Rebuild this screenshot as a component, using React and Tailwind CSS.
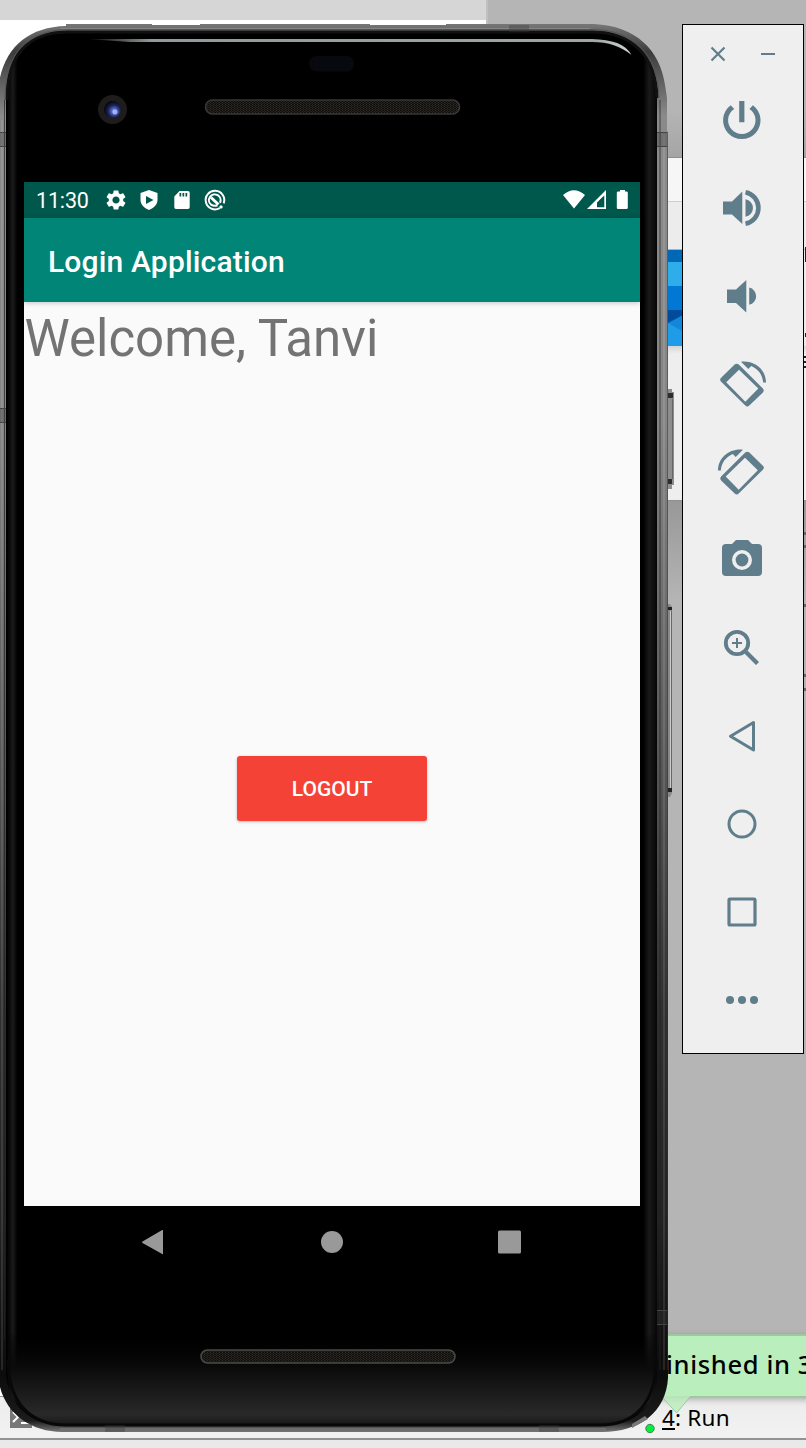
import React from "react";
import { MdSettings } from "react-icons/md";

const C = "#607d8b";

function Tool({ children }) {
  return (
    <div className="flex h-[88px] w-full items-center justify-center pr-[2px]">
      <svg className="overflow-visible" width="48" height="48" viewBox="0 0 48 48" fill={C}>{children}</svg>
    </div>
  );
}

function RotateIcon({ flip }) {
  return (
    <g transform={flip ? "translate(48 0) scale(-1 1)" : undefined}>
      <path fillRule="evenodd" d="M16.600 4.600Q18.700 2.700 20.800 4.600L44.900 28.600Q46.500 30.500 44.900 32.400L31.300 45.600Q29.300 47.400 27.300 45.600L2.900 21.400Q1.400 19.700 2.900 18zM21 9.800 8.200 22.300 27.300 41.700 40.300 28.500z" />
      <path d="M23 1.700C36.500 .2 48 9.500 48 22.600H45.200C44.500 14.500 40 8.700 33.200 5.900L30.300 9z" />
    </g>
  );
}

function StatusBar() {
  return (
    <div className="flex h-[36px] items-center bg-[#00574b] pl-3 pr-[11px] text-white">
      <span className="w-[57px] pt-[2px] font-['Roboto',sans-serif] text-[21.500px] leading-none tracking-[-0.15px]">11:30</span>
      <svg className="ml-3" width="22" height="22" viewBox="1 1 22 22" fill="white"><MdSettings size={24} /></svg>
      <svg className="ml-[11px]" width="22" height="22" viewBox="0 0 22 22"><path fillRule="evenodd" fill="white" d="M11 1 19.500 4v7c0 5-4.500 8.500-8.500 10-4-1.500-8.500-5-8.500-10V4zM8 7v8l7.500-4z" /></svg>
      <svg className="ml-[11px]" width="22" height="22" viewBox="0 0 22 22"><path fillRule="evenodd" fill="white" d="M8.500 2H17q1.700 0 1.700 1.700v14.600q0 1.700-1.700 1.700H5q-1.700 0-1.700-1.700V7.500zM8.500 4v3.500h1.700V4zm3 0v3.500h1.700V4zm3 0v3.500h1.700V4z" /></svg>
      <svg className="ml-[10px]" width="24" height="24" viewBox="0 0 24 24" fill="none" stroke="white"><path d="M16.700 20.100A9.300 9.300 0 1 1 20.700 15.300" strokeWidth="2" /><path d="M17 14.700A5.800 5.800 0 1 0 8 16.600Q11 18.500 14.500 17.300" strokeWidth="2" /><path d="M8 9.500 15.500 16.500M17 18l2 2" strokeWidth="3" /></svg>
      <div className="grow" />
      <svg width="66" height="24" viewBox="0 0 66 24" fill="white"><path d="M0 7Q11-2.500 22 7L11 20.500z" /><path fillRule="evenodd" d="M43 2v19H24zM41.300 7.500 34 14.500V19.300H41.300z" /><path d="M36.500 12.500 40 9v9.500h-3.500z" fill="#00574b" /><path d="M57 2h5v1.500h1.500q1.300 0 1.300 1.200v15q0 1.300-1.300 1.300h-8.400q-1.300 0-1.300-1.300v-15q0-1.200 1.300-1.200H57z" /></svg>
    </div>
  );
}

function PhoneBody() {
  return (
    <svg className="absolute inset-0" width="680" height="1448" viewBox="0 0 680 1448">
      <defs>
        <linearGradient id="rim" x1="0" y1="24" x2="0" y2="1432" gradientUnits="userSpaceOnUse">
          <stop offset="0" stopColor="#777" /><stop offset=".02" stopColor="#3c3c3c" /><stop offset=".045" stopColor="#666" /><stop offset=".065" stopColor="#8a8a8a" /><stop offset=".28" stopColor="#858585" /><stop offset=".5" stopColor="#5c5c5c" /><stop offset=".7" stopColor="#303030" /><stop offset=".85" stopColor="#222" /><stop offset=".96" stopColor="#0c0c0c" /><stop offset=".992" stopColor="#1c1c1c" /><stop offset="1" stopColor="#777" />
        </linearGradient>
        <linearGradient id="chin" x1="0" y1="1330" x2="0" y2="1426" gradientUnits="userSpaceOnUse">
          <stop offset="0" stopColor="#000" stopOpacity="0" /><stop offset=".4" stopColor="#0b0b0b" /><stop offset=".88" stopColor="#292929" /><stop offset="1" stopColor="#161616" />
        </linearGradient>
        <linearGradient id="shine" x1="86" x2="632" y1="0" y2="0" gradientUnits="userSpaceOnUse">
          <stop offset="0" stopColor="#99a0a4" stopOpacity="0" /><stop offset=".12" stopColor="#92999c" /><stop offset=".93" stopColor="#a0a6a8" /><stop offset="1" stopColor="#d0d5d6" />
        </linearGradient>
        <linearGradient id="edge" x1="7" x2="657" y1="0" y2="0" gradientUnits="userSpaceOnUse">
          <stop offset="0" stopColor="#000" /><stop offset=".009" stopColor="#1a1a1a" /><stop offset=".016" stopColor="#000" /><stop offset=".979" stopColor="#000" /><stop offset=".988" stopColor="#1a1a1a" /><stop offset="1" stopColor="#060606" />
        </linearGradient>
        <radialGradient id="lens" cx=".6" cy=".6" r=".6"><stop offset="0" stopColor="#9fb5ff" /><stop offset=".25" stopColor="#5267c8" /><stop offset=".6" stopColor="#1b2354" /><stop offset="1" stopColor="#05060c" /></radialGradient>
        <pattern id="mesh" width="3" height="2" patternUnits="userSpaceOnUse"><path d="M0 0h3v2H0z" fill="#11100e" /><path d="M0 0h1v1H0zM1.500 1h1v1h-1z" fill="#302c27" /></pattern>
      </defs>
      <path d="M667 389h5v3h2v93h-2v4h-5z" fill="#8d8d8d" /><path d="M668 393h5v5h-5zM668 479h4v5h-4z" fill="#2c2c2c" /><path d="M672.500 399v80" stroke="#666" />
      <path d="M666 604h4l2 3v186l-2 4h-4z" fill="#888" /><path d="M667 607h5v3h-5zM667 788h5v4h-5z" fill="#222" /><path d="M670.500 611v177" stroke="#ccc" /><path d="M671.500 611v177" stroke="#666" />
      <path d="M-2 90C2 50 26 27 66 26V24H152V25H200V24H370V25H446V24H594C636 26 660 50 665 85L667 98V131L668 132V1378C666 1412 640 1432 602 1432H62C28 1432 0 1410-2 1374V90z" fill="url(#rim)" />
      <path d="M6 96C6 53 28 32 68 32H592C632 32 656 56 657 98V1374C657 1406 634 1426 600 1426H66C30 1426 6 1404 6 1370z" fill="url(#edge)" />
      <path d="M7 100C7 55 28 32 68 32H592C632 32 656 56 657 98" fill="none" stroke="#111" strokeWidth="3" />
      <path d="M5 100C5 53 26 30 68 29.500H592C634 30 658 54 659 98" fill="none" stroke="#555" />
      <path d="M24 1340H640L656 1330V1374C656 1406 634 1425 600 1425H66C30 1425 8 1404 8 1370V1330z" fill="url(#chin)" />
      <path d="M8 1360C8 1402 30 1425 66 1425H600C634 1425 656 1404 656 1360" fill="none" stroke="#080808" strokeWidth="3" />
      <path d="M4.500 100V1340M660 100V1370" stroke="#222" opacity=".7" fill="none" />
      <path d="M664 135V1370M2 120V1370" stroke="#fff" strokeWidth="2" opacity=".1" /><path d="M667.500 132V1370" stroke="#333" opacity=".5" />
      <path d="M60 28.500H590" stroke="#bbb" opacity=".3" /><path d="M60 1429.500H606" stroke="#6e6e6e" strokeWidth="3" />
      <path d="M0 132h6v15H0zM0 408h6v15H0zM657 132h10v15H657zM509 25h20v7H509zM105 1425h20v7H105zM539 1425h20v7H539zM657 1310h10v14H657z" fill="#3a3a3a" opacity=".35" />
      <path d="M0 132.500h6M0 146.500h6M0 408.500h6M0 422.500h6M657 132.500h10M657 146.500h10M657 1310.500h10M657 1324.500h10" stroke="#444" />
      <path d="M86 39H592C612 39.500 626 44 631.500 55C620 46 609 42 592 42H130z" fill="url(#shine)" />
      <rect x="309" y="56" width="45" height="15.500" rx="7.500" fill="#08090e" />
      <circle cx="112.500" cy="109.500" r="14.500" fill="#1f1c1c" /><circle cx="112.500" cy="109.500" r="8.500" fill="url(#lens)" /><circle cx="115" cy="112" r="2.500" fill="#aebeff" opacity=".8" />
      <rect x="205.500" y="100" width="254" height="14" rx="7" fill="url(#mesh)" stroke="#3a3735" strokeWidth="1.600" />
      <rect x="201" y="1350" width="254" height="13" rx="6.500" fill="url(#mesh)" stroke="#4a4947" strokeWidth="1.600" />
    </svg>
  );
}

function Phone() {
  return (
    <div className="absolute left-0 top-0 h-[1448px] w-[680px]">
      <PhoneBody />
      <div className="relative ml-6 mt-[182px] flex h-[1096px] w-[616px] flex-col bg-[#fafafa]">
        <StatusBar />
        <div className="flex h-[84px] shrink-0 items-center bg-[#008577] pl-6 pt-[2px] font-['Roboto',sans-serif] text-[30px] font-medium tracking-[0.17px] text-white shadow-[0_1px_5px_rgba(0,0,0,0.22)]">Login Application</div>
        <div className="flex grow flex-col items-center">
          <h1 className="w-full pl-[0.5px] pt-[5px] font-['Roboto',sans-serif] text-[51px] leading-[64px] text-[#737373]">Welcome, Tanvi</h1>
          <button className="mt-[385px] h-[65px] w-[190px] rounded-[3px] bg-[#f44336] pt-[2px] font-['Roboto',sans-serif] text-[21px] font-medium text-white shadow-[0_1px_3px_rgba(0,0,0,0.25)]">LOGOUT</button>
        </div>
        <div className="flex h-[72px] items-center bg-black">
          <svg width="616" height="72" viewBox="0 0 616 72" fill="#999"><path d="M139 24.500v23.200q0 .8-.8.400L118.500 37q-1-.8 0-1.600l19.700-11.300q.8-.4.800.4z" /><circle cx="308" cy="36" r="11" /><rect x="474" y="24.500" width="23" height="23" rx="1.500" /></svg>
        </div>
      </div>
    </div>
  );
}

function Toolbar() {
  return (
    <aside className="absolute left-[682px] top-6 flex h-[1030px] w-[122px] flex-col border border-black bg-[#efefef]">
      <div className="flex h-[51px] items-center justify-between pl-[27px] pr-[28px] pt-[7px]">
        <svg width="16" height="16" viewBox="0 0 16 16" stroke={C} strokeWidth="2.200"><path d="M1.500 1.500l13 13M14.500 1.500l-13 13" /></svg>
        <svg width="14" height="2" viewBox="0 0 14 2"><path d="M0 0h14v2H0z" fill={C} /></svg>
      </div>
      <Tool><path transform="translate(0 -1)" d="M21.200 6h5.200v21.300h-5.200zM31.400 13.900l3.500-3.600A18.700 18.700 0 1 1 12.700 10.300l3.500 3.600A13.700 13.700 0 1 0 31.400 13.900z" /></Tool>
      <Tool><path d="M5 17.500h9L24.300 7.500v32.500L14 30.500H5zM27.500 15.300a8.800 8.800 0 0 1 0 17.400z" /><path d="M27.500 8.300a16 16 0 0 1 0 31.400" fill="none" stroke={C} strokeWidth="4.600" /></Tool>
      <Tool><path d="M9 17.500h9L28.300 8v32.500L18 31H9zM31.200 15.600a8.800 8.800 0 0 1 0 17.200z" /></Tool>
      <Tool><RotateIcon /></Tool>
      <Tool><RotateIcon flip /></Tool>
      <Tool><path fillRule="evenodd" d="M18 4h12l4 4h6q4 0 4 4v24q0 4-4 4H8q-4 0-4-4v-24q0-4 4-4h6zM24 14a10 10 0 1 0 0 20 10 10 0 0 0 0-20z" /><circle cx="24" cy="24" r="6.400" /></Tool>
      <Tool><circle cx="19" cy="19" r="11.200" fill="none" stroke={C} strokeWidth="3.800" /><path d="M26.500 29.500l3-3L41 38 38 41zM18 14h2v4h4v2h-4v4h-2v-4h-4v-2h4z" /></Tool>
      <Tool><path d="M35.500 10.500v27.500L12.500 24.300z" fill="none" stroke={C} strokeWidth="3" strokeLinejoin="round" /></Tool>
      <Tool><circle cx="24" cy="24" r="13" fill="none" stroke={C} strokeWidth="3" /></Tool>
      <Tool><rect x="11" y="11" width="26" height="26" rx="1" fill="none" stroke={C} strokeWidth="3.200" /></Tool>
      <Tool><circle cx="12" cy="24" r="4" /><circle cx="24" cy="24" r="4" /><circle cx="36" cy="24" r="4" /></Tool>
    </aside>
  );
}

function Desktop() {
  return (
    <div className="flex h-full flex-col">
      <div className="flex h-[1396px]">
        <div className="w-[486px] border-t-[20px] border-[#d6d6d6] bg-white" />
        <div className="flex grow flex-col border-l-2 border-[#c0c0c0] bg-[#b5b5b5]">
          <div className="h-[158px] border-b border-[#8f8f8f] bg-linear-to-b from-[#b5b5b5] from-70% to-[#a5a5a5]" />
          <div className="h-[43px] bg-[#f6f6f6]" />
          <div className="h-[49px] border-t border-b border-t-[#cfcfcf] border-b-[#9bb9cc] bg-[#ececec]" />
          <div className="flex h-[96px] bg-[#ececec]">
            <svg className="ml-[180px] shrink-0" width="30" height="96" viewBox="0 0 30 96"><path fill="#0068b4" d="M0 0h30v12H0z" /><path fill="#2daeea" d="M0 12h30v24H0z" /><path fill="#0078d4" d="M0 36h30v24H0z" /><path fill="#004b9b" d="M0 60h30v20H0z" /><path fill="#1386da" d="M0 73 30 57v40H0z" /><path fill="#1e9ce8" d="M0 73 30 90v7H0z" /></svg>
          </div>
          <div className="h-[155px] border-b border-[#8f8f8f] bg-linear-to-b from-[#d5d5d5] to-[#eeeeee] to-5%" />
          <div className="h-[100px] bg-linear-to-b from-[#989898] to-[#b5b5b5]" />
        </div>
      </div>
      <div className="h-[44px] border-t border-b-2 border-t-[#999] border-b-[#929292] bg-linear-to-b from-[#ececec] to-[#f2f2f2]" />
      <div className="grow bg-[#e9e9e9]" />
    </div>
  );
}

export default function App() {
  return (
    <main className="relative h-[1448px] w-[806px] overflow-hidden bg-[#b5b5b5]">
      <Desktop />
      <svg className="absolute left-[804px] top-[240px]" width="2" height="460" viewBox="0 0 2 460"><path d="M1 7h1v15H1zM1 93h1v4H1zM0 116h2v2H0zM0 121h2v2H0zM0 126h2v2H0z" fill="#222" /><path d="M0 292h2v3H0zM0 305h2v3H0zM0 364h2v3H0zM0 434h2v3H0zM0 448h2v3H0z" fill="#666" /></svg>
      <svg className="absolute left-[10px] top-[1406px]" width="24" height="22" viewBox="0 0 24 22"><path fill="#777" d="M0 0h22v22H0z" /><path d="M3 6l5 5-5 5M11 17h9" fill="none" stroke="white" strokeWidth="2" /></svg>
      <div className="absolute left-[640px] top-[1334px] h-[64px] w-[200px] border-y-2 border-[#9fc7a0] bg-[#baeebd] pl-[26px] pt-[11px] font-['Noto_Sans',sans-serif] text-[25.500px] font-medium leading-[34px] tracking-[0.65px] whitespace-nowrap text-black shadow-[0_2px_6px_rgba(0,0,0,0.25)]">inished in 3</div>
      <div className="absolute left-[662px] top-[1405px] flex font-['Noto_Sans',sans-serif] text-[22.500px] leading-[26px] tracking-[0.2px] text-black"><span className="h-[25px] border-b-2 border-black">4</span>: Run</div>
      <svg className="absolute left-[661px] top-[1395px]" width="32" height="24" viewBox="0 0 32 24"><path d="M0 0h30L15.500 18z" fill="#baeebd" opacity=".8" /><path d="M1 2l14.500 16L29 2" fill="none" stroke="#9fc7a0" /></svg>
      <Phone />
      <svg className="absolute left-[630px] top-[1412px]" width="28" height="24" viewBox="0 0 28 24"><path d="M2 16V12L15 4 18 7z" fill="#777" /><circle cx="20" cy="16.500" r="4.200" fill="#00f03c" stroke="#487d50" strokeWidth="1" /></svg>
      <Toolbar />
    </main>
  );
}
